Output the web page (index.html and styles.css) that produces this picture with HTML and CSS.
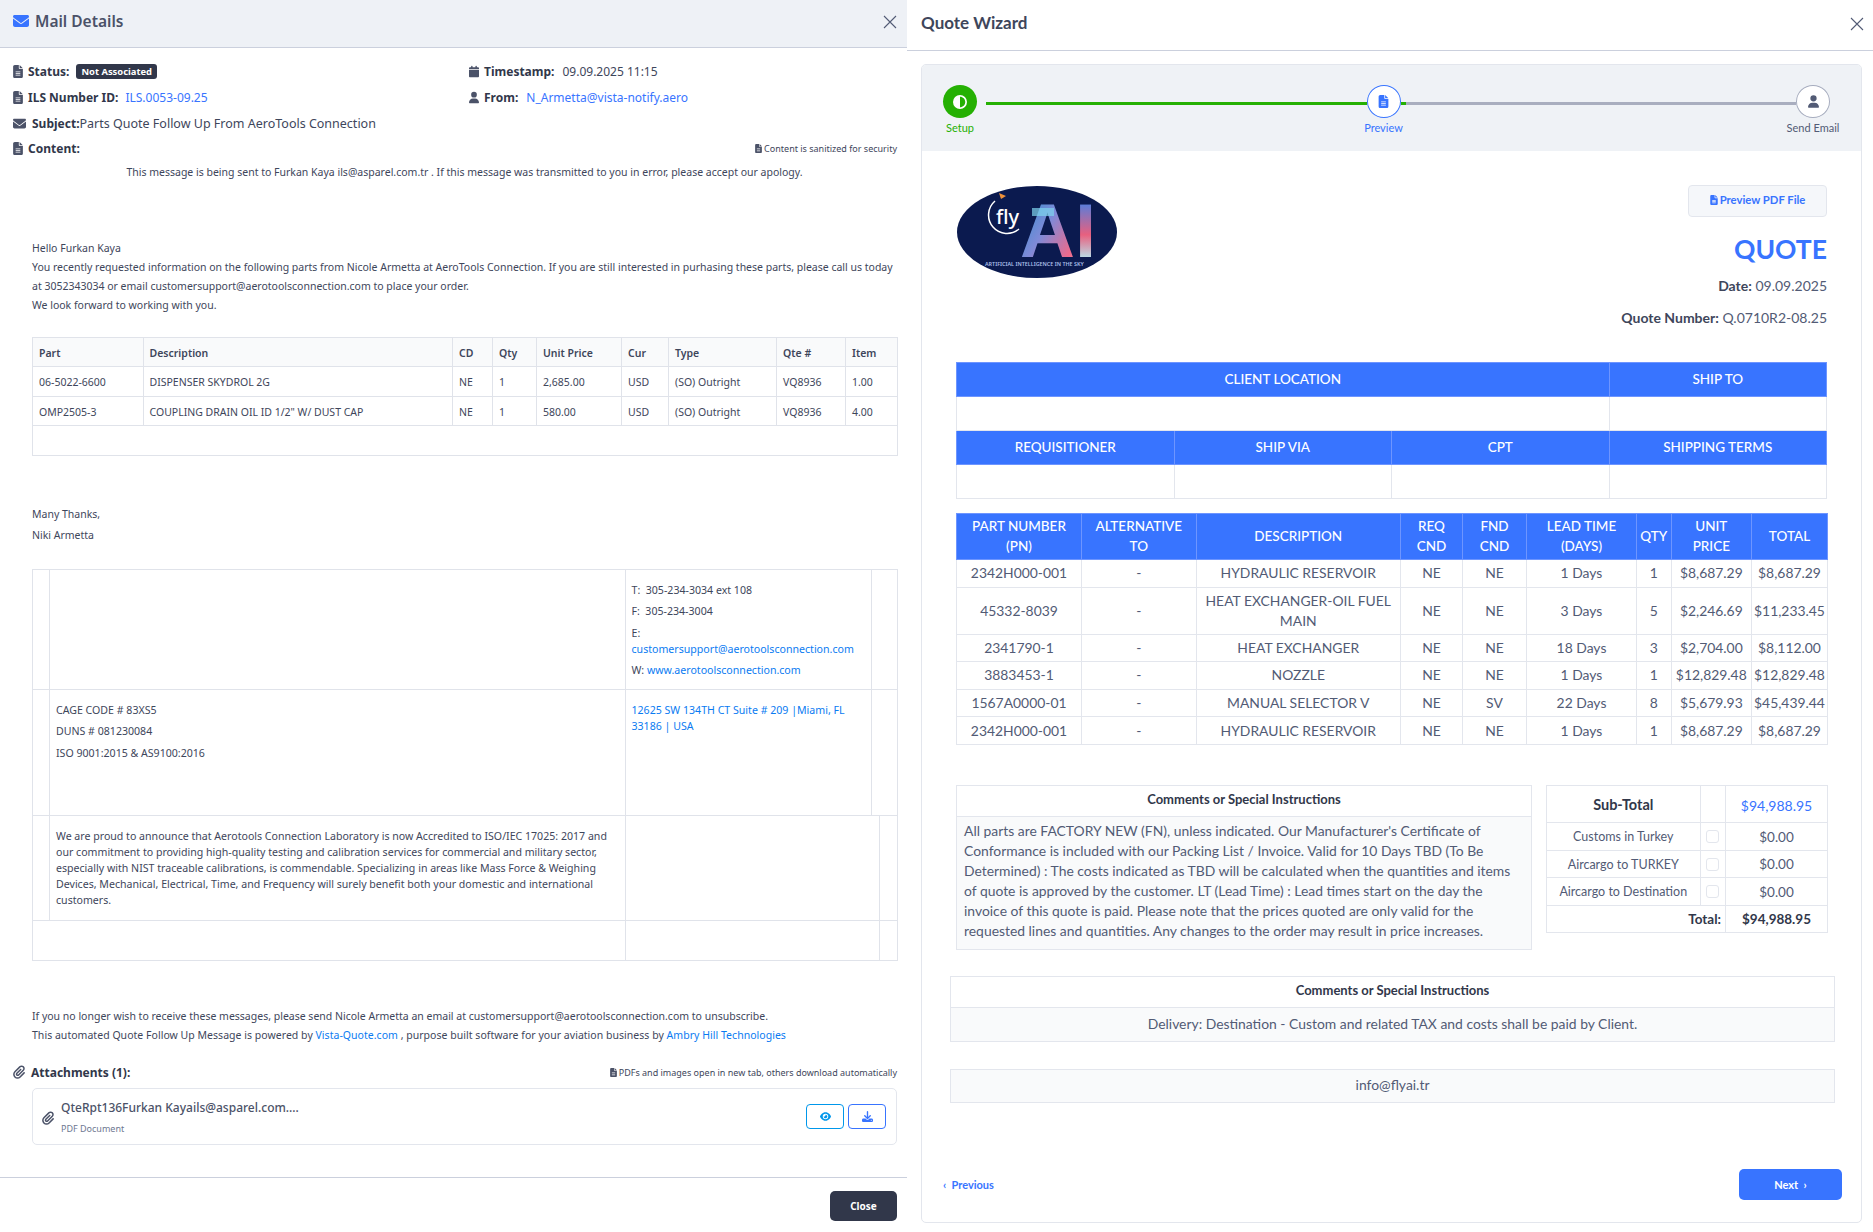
FILE: index.html
```html
<!DOCTYPE html>
<html lang="en">
<head>
  <meta charset="UTF-8" />
  <meta name="viewport" content="width=device-width, initial-scale=1.0" />
  <title>Mail Details / Quote Wizard</title>
  <link rel="stylesheet" href="styles.css">
</head>
<body>
  <svg class="icon-defs" width="0" height="0">
    <symbol id="i-file" viewBox="0 0 384 512"><path d="M64 0C28.7 0 0 28.7 0 64V448c0 35.3 28.7 64 64 64H320c35.3 0 64-28.7 64-64V160H256c-17.7 0-32-14.3-32-32V0H64zM256 0V128H384L256 0zM112 256H272c8.8 0 16 7.2 16 16s-7.2 16-16 16H112c-8.8 0-16-7.2-16-16s7.2-16 16-16zm0 64H272c8.8 0 16 7.2 16 16s-7.2 16-16 16H112c-8.8 0-16-7.2-16-16s7.2-16 16-16zm0 64H272c8.8 0 16 7.2 16 16s-7.2 16-16 16H112c-8.8 0-16-7.2-16-16s7.2-16 16-16z"/></symbol>
    <symbol id="i-mail" viewBox="0 0 512 512"><path d="M48 64C21.5 64 0 85.5 0 112c0 15.1 7.1 29.3 19.2 38.4L236.8 313.6c11.4 8.5 27 8.5 38.4 0L492.8 150.4c12.1-9.1 19.2-23.3 19.2-38.4c0-26.5-21.5-48-48-48H48zM0 176V384c0 35.3 28.7 64 64 64H448c35.3 0 64-28.7 64-64V176L294.4 339.2c-22.8 17.1-54 17.1-76.8 0L0 176z"/></symbol>
    <symbol id="i-cal" viewBox="0 0 448 512"><path d="M96 32V64H48C21.5 64 0 85.5 0 112v48H448V112c0-26.5-21.5-48-48-48H352V32c0-17.7-14.3-32-32-32s-32 14.3-32 32V64H160V32c0-17.7-14.3-32-32-32S96 14.3 96 32zM448 192H0V464c0 26.5 21.5 48 48 48H400c26.5 0 48-21.5 48-48V192z"/></symbol>
    <symbol id="i-user" viewBox="0 0 448 512"><path d="M224 256A128 128 0 1 0 224 0a128 128 0 1 0 0 256zm-45.7 48C79.8 304 0 383.8 0 482.3C0 498.7 13.3 512 29.7 512H418.3c16.4 0 29.7-13.3 29.7-29.7C448 383.8 368.2 304 269.7 304H178.3z"/></symbol>
    <symbol id="i-clip" viewBox="0 0 448 512"><path d="M364.2 83.8c-24.4-24.4-64-24.4-88.4 0l-184 184c-42.1 42.1-42.1 110.3 0 152.4s110.3 42.1 152.4 0l152-152c10.9-10.9 28.7-10.9 39.6 0s10.9 28.7 0 39.6l-152 152c-64 64-167.6 64-231.6 0s-64-167.6 0-231.6l184-184c46.3-46.3 121.3-46.3 167.6 0s46.3 121.3 0 167.6l-176 176c-28.6 28.6-75 28.6-103.6 0s-28.6-75 0-103.6l144-144c10.9-10.9 28.7-10.9 39.6 0s10.9 28.7 0 39.6l-144 144c-6.7 6.7-6.7 17.7 0 24.4s17.7 6.7 24.4 0l176-176c24.4-24.4 24.4-64 0-88.4z"/></symbol>
    <symbol id="i-eye" viewBox="0 0 576 512"><path d="M288 32c-80.8 0-145.5 36.8-192.6 80.6C48.6 156 17.3 208 2.5 243.7c-3.3 7.9-3.3 16.7 0 24.6C17.3 304 48.6 356 95.4 399.4C142.5 443.2 207.2 480 288 480s145.5-36.8 192.6-80.6c46.8-43.5 78.1-95.4 93-131.1c3.3-7.9 3.3-16.7 0-24.6c-14.9-35.7-46.2-87.7-93-131.1C433.5 68.8 368.8 32 288 32zM144 256a144 144 0 1 1 288 0 144 144 0 1 1 -288 0zm144-64c0 35.3-28.7 64-64 64c-7.1 0-13.9-1.2-20.3-3.3c-5.5-1.8-11.9 1.6-11.7 7.4c.3 6.9 1.3 13.8 3.2 20.7c13.7 51.2 66.4 81.6 117.6 67.9s81.6-66.4 67.9-117.6c-11.1-41.5-47.8-69.4-88.6-71.1c-5.8-.2-9.2 6.1-7.4 11.7c2.1 6.4 3.3 13.2 3.3 20.3z"/></symbol>
    <symbol id="i-down" viewBox="0 0 512 512"><path d="M288 32c0-17.7-14.3-32-32-32s-32 14.3-32 32V274.7l-73.4-73.4c-12.5-12.5-32.8-12.5-45.3 0s-12.5 32.8 0 45.3l128 128c12.5 12.5 32.8 12.5 45.3 0l128-128c12.5-12.5 12.5-32.8 0-45.3s-32.8-12.5-45.3 0L288 274.7V32zM64 352c-35.3 0-64 28.7-64 64v32c0 35.3 28.7 64 64 64H448c35.3 0 64-28.7 64-64V416c0-35.3-28.7-64-64-64H346.5l-45.3 45.3c-25 25-65.5 25-90.5 0L165.5 352H64zm368 56a24 24 0 1 1 0 48 24 24 0 1 1 0-48z"/></symbol>
    <symbol id="i-half" viewBox="0 0 512 512"><path d="M448 256c0-106-86-192-192-192V448c106 0 192-86 192-192zM0 256a256 256 0 1 1 512 0A256 256 0 1 1 0 256z"/></symbol>
    <symbol id="i-x" viewBox="0 0 14 14"><path d="M1 1L13 13M13 1L1 13" fill="none" stroke="currentColor" stroke-width="1.1"/></symbol>
  </svg>

  <div class="page">
    <!-- Mail details -->
    <section class="mail">
      <header class="mail-head">
        <svg class="head-icon"><use href="#i-mail"/></svg>
        <h2>Mail Details</h2>
        <svg class="close-x"><use href="#i-x"/></svg>
      </header>

      <div class="info">
        <div class="info-row"><svg class="ic"><use href="#i-file"/></svg><b>Status:</b><span class="badge">Not Associated</span></div>
        <div class="info-row info-right"><svg class="ic"><use href="#i-cal"/></svg><b>Timestamp:</b><span>09.09.2025 11:15</span></div>
        <div class="info-row"><svg class="ic"><use href="#i-file"/></svg><b>ILS Number ID:</b><a>ILS.0053-09.25</a></div>
        <div class="info-row info-right"><svg class="ic"><use href="#i-user"/></svg><b>From:</b><a>N_Armetta@vista-notify.aero</a></div>
        <div class="info-row info-wide"><svg class="ic ic-mail"><use href="#i-mail"/></svg><b>Subject:</b><span class="subject">Parts Quote Follow Up From AeroTools Connection</span></div>
        <div class="info-row info-wide info-split">
          <span class="info-row"><svg class="ic"><use href="#i-file"/></svg><b>Content:</b></span>
          <small class="note"><svg class="ic-small"><use href="#i-file"/></svg>Content is sanitized for security</small>
        </div>
      </div>

      <p class="notice">This message is being sent to Furkan Kaya ils@asparel.com.tr . If this message was transmitted to you in error, please accept our apology.</p>

      <div class="mail-body">
        <p>Hello Furkan Kaya</p>
        <p>You recently requested information on the following parts from Nicole Armetta at AeroTools Connection. If you are still interested in purhasing these parts, please call us today at 3052343034 or email customersupport@aerotoolsconnection.com to place your order.</p>
        <p>We look forward to working with you.</p>

        <table class="parts">
          <colgroup>
            <col class="c1"><col class="c2"><col class="c3"><col class="c4"><col class="c5"><col class="c6"><col class="c7"><col class="c8"><col class="c9">
          </colgroup>
          <thead>
            <tr><th>Part</th><th>Description</th><th>CD</th><th>Qty</th><th>Unit Price</th><th>Cur</th><th>Type</th><th>Qte #</th><th>Item</th></tr>
          </thead>
          <tbody>
            <tr><td>06-5022-6600</td><td>DISPENSER SKYDROL 2G</td><td>NE</td><td>1</td><td>2,685.00</td><td>USD</td><td>(SO) Outright</td><td>VQ8936</td><td>1.00</td></tr>
            <tr><td>OMP2505-3</td><td>COUPLING DRAIN OIL ID 1/2" W/ DUST CAP</td><td>NE</td><td>1</td><td>580.00</td><td>USD</td><td>(SO) Outright</td><td>VQ8936</td><td>4.00</td></tr>
            <tr><td colspan="9"></td></tr>
          </tbody>
        </table>

        <div class="thanks">
          <p>Many Thanks,</p>
          <p>Niki Armetta</p>
        </div>

        <table class="sig sig-a">
          <colgroup><col class="s1"><col class="s2"><col class="s3"><col class="s4"></colgroup>
          <tr class="sig-contact">
            <td></td>
            <td></td>
            <td>
              <p>T:&nbsp; 305-234-3034 ext 108</p>
              <p>F:&nbsp; 305-234-3004</p>
              <p class="tight">E:</p>
              <p><a>customersupport@aerotoolsconnection.com</a></p>
              <p>W: <a>www.aerotoolsconnection.com</a></p>
            </td>
            <td></td>
          </tr>
          <tr class="sig-address">
            <td></td>
            <td>
              <p>CAGE CODE # 83XS5</p>
              <p>DUNS # 081230084</p>
              <p>ISO 9001:2015 &amp; AS9100:2016</p>
            </td>
            <td><a>12625 SW 134TH CT Suite # 209 |Miami, FL 33186 | USA</a></td>
            <td></td>
          </tr>
        </table>
        <table class="sig sig-b">
          <colgroup><col class="s1"><col class="s2"><col class="s3b"><col class="s4b"></colgroup>
          <tr class="sig-text">
            <td></td>
            <td>We are proud to announce that Aerotools Connection Laboratory is now Accredited to ISO/IEC 17025: 2017 and our commitment to providing high-quality testing and calibration services for commercial and military sector, especially with NIST traceable calibrations, is commendable. Specializing in areas like Mass Force &amp; Weighing Devices, Mechanical, Electrical, Time, and Frequency will surely benefit both your domestic and international customers.</td>
            <td></td>
            <td></td>
          </tr>
          <tr class="sig-empty">
            <td colspan="2"></td>
            <td></td>
            <td></td>
          </tr>
        </table>

        <div class="unsub">
          <p>If you no longer wish to receive these messages, please send Nicole Armetta an email at customersupport@aerotoolsconnection.com to unsubscribe.</p>
          <p>This automated Quote Follow Up Message is powered by <a>Vista-Quote.com</a> , purpose built software for your aviation business by <a>Ambry Hill Technologies</a></p>
        </div>
      </div>

      <div class="attach-head">
        <div class="attach-title"><svg class="ic-clip"><use href="#i-clip"/></svg>Attachments (1):</div>
        <small class="note"><svg class="ic-small"><use href="#i-file"/></svg>PDFs and images open in new tab, others download automatically</small>
      </div>
      <div class="attach-card">
        <svg class="ic-clip card-clip"><use href="#i-clip"/></svg>
        <div class="attach-info">
          <div class="attach-name">QteRpt136Furkan Kayails@asparel.com....</div>
          <div class="attach-type">PDF Document</div>
        </div>
        <button class="icon-btn btn-eye"><svg><use href="#i-eye"/></svg></button>
        <button class="icon-btn btn-down"><svg><use href="#i-down"/></svg></button>
      </div>

      <footer class="mail-foot"><button class="btn-close">Close</button></footer>
    </section>

    <!-- Quote wizard -->
    <section class="wizard">
      <header class="wiz-head">
        <h2>Quote Wizard</h2>
        <svg class="close-x"><use href="#i-x"/></svg>
      </header>

      <div class="wiz-card">
        <div class="stepper">
          <div class="step step-done">
            <div class="dot"><svg><use href="#i-half"/></svg></div>
            <span>Setup</span>
          </div>
          <div class="step-line line-done"></div>
          <div class="step step-now">
            <div class="dot"><svg class="dot-file"><use href="#i-file"/></svg></div>
            <span>Preview</span>
          </div>
          <div class="step-line line-todo"></div>
          <div class="step step-next">
            <div class="dot"><svg class="dot-file"><use href="#i-user"/></svg></div>
            <span>Send Email</span>
          </div>
        </div>

        <div class="quote">
          <div class="quote-top">
            <svg class="logo" viewBox="0 0 160 92">
              <defs>
                <linearGradient id="aFill" x1="0" y1="0" x2="1" y2="0.7">
                  <stop offset="0" stop-color="#1f8fc9"/>
                  <stop offset="0.45" stop-color="#7f8ad8"/>
                  <stop offset="0.8" stop-color="#ee6a8c"/>
                  <stop offset="1" stop-color="#f2a3a8"/>
                </linearGradient>
                <linearGradient id="iFill" x1="0" y1="0" x2="0" y2="1">
                  <stop offset="0.2" stop-color="#5e7cd6"/>
                  <stop offset="0.55" stop-color="#e8607f"/>
                  <stop offset="0.85" stop-color="#b5eaf2"/>
                </linearGradient>
              </defs>
              <ellipse cx="80" cy="46" rx="80" ry="46" fill="#0b1a4f"/>
              <path d="M38 15A17 17 0 1 0 62 43" fill="none" stroke="#fff" stroke-width="1.5"/>
              <path d="M42 7L49 10L44 13Z" fill="#f0913a"/>
              <text class="logo-fly" x="39" y="38">fly</text>
              <text class="logo-ai" x="63" y="71"><tspan fill="url(#aFill)">A</tspan><tspan fill="url(#iFill)">I</tspan></text>
              <rect x="75" y="22" width="22" height="8" fill="#7fd4ee" opacity="0.7"/>
              <text class="logo-tag" x="28" y="80">ARTIFICIAL INTELLIGENCE IN THE SKY</text>
            </svg>
            <div class="quote-meta">
              <button class="btn-pdf"><svg><use href="#i-file"/></svg>Preview PDF File</button>
              <h1>QUOTE</h1>
              <p class="meta-date"><b>Date:</b> 09.09.2025</p>
              <p class="meta-num"><b>Quote Number:</b> Q.0710R2-08.25</p>
            </div>
          </div>

          <table class="ship">
            <tr class="ship-h"><th colspan="3">CLIENT LOCATION</th><th>SHIP TO</th></tr>
            <tr class="ship-b"><td colspan="3"></td><td></td></tr>
            <tr class="ship-h"><th>REQUISITIONER</th><th>SHIP VIA</th><th>CPT</th><th>SHIPPING TERMS</th></tr>
            <tr class="ship-b"><td></td><td></td><td></td><td></td></tr>
          </table>

          <table class="items">
            <colgroup>
              <col class="i1"><col class="i2"><col class="i3"><col class="i4"><col class="i5"><col class="i6"><col class="i7"><col class="i8"><col class="i9">
            </colgroup>
            <thead>
              <tr><th>PART NUMBER (PN)</th><th>ALTERNATIVE TO</th><th>DESCRIPTION</th><th>REQ CND</th><th>FND CND</th><th>LEAD TIME (DAYS)</th><th>QTY</th><th>UNIT<br>PRICE</th><th>TOTAL</th></tr>
            </thead>
            <tbody>
              <tr><td>2342H000-001</td><td>-</td><td>HYDRAULIC RESERVOIR</td><td>NE</td><td>NE</td><td>1 Days</td><td>1</td><td>$8,687.29</td><td>$8,687.29</td></tr>
              <tr><td>45332-8039</td><td>-</td><td>HEAT EXCHANGER-OIL FUEL MAIN</td><td>NE</td><td>NE</td><td>3 Days</td><td>5</td><td>$2,246.69</td><td>$11,233.45</td></tr>
              <tr><td>2341790-1</td><td>-</td><td>HEAT EXCHANGER</td><td>NE</td><td>NE</td><td>18 Days</td><td>3</td><td>$2,704.00</td><td>$8,112.00</td></tr>
              <tr><td>3883453-1</td><td>-</td><td>NOZZLE</td><td>NE</td><td>NE</td><td>1 Days</td><td>1</td><td>$12,829.48</td><td>$12,829.48</td></tr>
              <tr><td>1567A0000-01</td><td>-</td><td>MANUAL SELECTOR V</td><td>NE</td><td>SV</td><td>22 Days</td><td>8</td><td>$5,679.93</td><td>$45,439.44</td></tr>
              <tr><td>2342H000-001</td><td>-</td><td>HYDRAULIC RESERVOIR</td><td>NE</td><td>NE</td><td>1 Days</td><td>1</td><td>$8,687.29</td><td>$8,687.29</td></tr>
            </tbody>
          </table>

          <div class="summary">
            <div class="comments">
              <div class="comments-h">Comments or Special Instructions</div>
              <div class="comments-b">All parts are FACTORY NEW (FN), unless indicated. Our Manufacturer's Certificate of Conformance is included with our Packing List / Invoice. Valid for 10 Days TBD (To Be Determined) : The costs indicated as TBD will be calculated when the quantities and items of quote is approved by the customer. LT (Lead Time) : Lead times start on the day the invoice of this quote is paid. Please note that the prices quoted are only valid for the requested lines and quantities. Any changes to the order may result in price increases.</div>
            </div>
            <table class="totals">
              <colgroup><col class="t1"><col class="t2"><col class="t3"></colgroup>
              <tr class="row-sub"><th>Sub-Total</th><td></td><td class="sub-val">$94,988.95</td></tr>
              <tr><td>Customs in Turkey</td><td><span class="check"></span></td><td>$0.00</td></tr>
              <tr><td>Aircargo to TURKEY</td><td><span class="check"></span></td><td>$0.00</td></tr>
              <tr><td>Aircargo to Destination</td><td><span class="check"></span></td><td>$0.00</td></tr>
              <tr class="row-total"><th colspan="2">Total:</th><th>$94,988.95</th></tr>
            </table>
          </div>

          <div class="wide-box">
            <div class="wide-h">Comments or Special Instructions</div>
            <div class="wide-b">Delivery: Destination - Custom and related TAX and costs shall be paid by Client.</div>
          </div>
          <div class="wide-box mail-box">info@flyai.tr</div>

          <div class="wiz-nav">
            <a class="prev">&#8249;&nbsp; Previous</a>
            <button class="btn-next">Next &nbsp;&#8250;</button>
          </div>
        </div>
      </div>
    </section>
  </div>
</body>
</html>
```

FILE: styles.css
```css
* { box-sizing: border-box; }

body {
  margin: 0;
  font-family: "Noto Sans", Arial, sans-serif;
  color: #3e465b;
  background: #fff;
}

.icon-defs { position: absolute; }

.page {
  display: flex;
  width: 1873px;
  height: 1232px;
  overflow: hidden;
}

a { color: #0a7bf2; text-decoration: none; }

/* left panel */
.mail {
  width: 907px;
  flex: none;
  display: flex;
  flex-direction: column;
}

.mail-head {
  height: 48px;
  background: #eef1f6;
  border-bottom: 1px solid #cbd0dd;
  display: flex;
  align-items: center;
  padding: 0 10px 5px 13px;
}

.mail-head h2 {
  margin: 0 0 0 6px;
  font-size: 15.5px;
  font-weight: 600;
  color: #4b5268;
  flex: 1;
}

.head-icon { width: 16px; height: 16px; fill: #3874ff; }

.close-x { width: 14px; height: 14px; color: #525b75; margin-top: 2px; }

.info {
  display: grid;
  grid-template-columns: 456px 1fr;
  grid-auto-rows: 25.7px;
  margin-top: 11px;
  padding: 0 10px 0 13px;
  font-size: 12px;
}

.info-row {
  display: flex;
  align-items: center;
  gap: 5px;
}

.info-row b { font-weight: 700; color: #31374a; }
.info-row a { color: #3874ff; margin-left: 2px; }
.info-right span, .info-right a { margin-left: 3px; }

.info-wide { grid-column: 1 / 3; }
.info-split { justify-content: space-between; }

.ic { width: 10px; height: 13px; fill: #4b5268; flex: none; }
.ic-mail { width: 13px; margin-right: 1px; }

.subject { margin-left: -5px; font-size: 12.5px; }

.badge {
  background: #31374a;
  color: #fff;
  font-size: 9.4px;
  font-weight: 700;
  padding: 1px 5px;
  border-radius: 3px;
  margin-left: 2px;
}

.note { font-size: 9px; display: flex; align-items: center; gap: 2px; color: #3e465b; }
.ic-small { width: 7px; height: 9px; fill: #4b5268; }

.notice {
  margin: 2px 0 0;
  text-align: center;
  padding: 0 10px 0 32px;
  font-size: 10.5px;
  line-height: 17px;
}

.mail-body {
  padding: 0 10px 0 32px;
  margin-top: 58px;
  font-size: 10.5px;
}

.mail-body p { margin: 0; line-height: 19px; }

table { border-collapse: collapse; table-layout: fixed; }

.parts {
  width: 864.5px;
  margin-top: 22px;
}

.parts th, .parts td {
  border: 1px solid #e0e3ea;
  padding: 0 6px;
  height: 29.5px;
  text-align: left;
  font-weight: 400;
}

.parts th { background: #f9fafb; font-weight: 600; padding-top: 1px; }
.parts tr:nth-child(2) td { padding-top: 2px; }

.parts .c1 { width: 110.5px; }
.parts .c2 { width: 309.5px; }
.parts .c3 { width: 40px; }
.parts .c4 { width: 44px; }
.parts .c5 { width: 85px; }
.parts .c6 { width: 47px; }
.parts .c7 { width: 108px; }
.parts .c8 { width: 69px; }
.parts .c9 { width: 51.5px; }

.thanks { margin-top: 48px; }
.mail-body .thanks p { line-height: 21px; }

.sig { width: 864.5px; font-size: 10.6px; }
.sig-a { margin-top: 23px; }

.sig td {
  border: 1px solid #e0e3ea;
  vertical-align: top;
  padding: 12px 6px 0;
  line-height: 16px;
}

.sig p, .mail-body .sig p { line-height: 16px; margin-bottom: 5.5px; }
.mail-body .sig p.tight { margin-bottom: 0; }

.sig .s1 { width: 17px; }
.sig .s2 { width: 575.5px; }
.sig .s3 { width: 246px; }
.sig .s4 { width: 26px; }
.sig .s3b { width: 254px; }
.sig .s4b { width: 18px; }

.sig-contact { height: 120px; }
.sig-address { height: 126px; }
.sig-text { height: 105px; }
.sig-empty { height: 40px; }

.sig-b tr td { border-top: none; }

.unsub { margin-top: 46px; }
.unsub p:last-child { letter-spacing: 0.03px; }

.attach-head {
  display: flex;
  justify-content: space-between;
  align-items: center;
  padding: 0 10px 0 13px;
  margin-top: 17px;
  height: 20px;
}

.attach-title {
  display: flex;
  align-items: center;
  gap: 6px;
  font-size: 12px;
  font-weight: 700;
  color: #31374a;
}

.ic-clip { width: 12px; height: 14px; fill: #4b5268; }

.attach-card {
  height: 57px;
  margin: 6px 10px 0 32px;
  border: 1px solid #e3e6ed;
  border-radius: 5px;
  display: flex;
  align-items: center;
  padding: 0 10px 0 9px;
}

.card-clip { margin-top: 2px; }

.attach-info { flex: 1; margin-left: 7px; padding-top: 1px; }

.attach-name { font-size: 12px; font-weight: 500; color: #4b5268; line-height: 18px; }
.attach-type { font-size: 9px; color: #6e7891; margin-top: 5px; }

.icon-btn {
  width: 38px;
  height: 25px;
  background: #fff;
  border-radius: 4px;
  padding: 0;
  margin-left: 4px;
  display: flex;
  align-items: center;
  justify-content: center;
}

.icon-btn svg { width: 11px; height: 11px; }

.btn-eye { border: 1px solid #0097eb; fill: #0097eb; }
.btn-down { border: 1px solid #3874ff; fill: #3874ff; }

.mail-foot {
  margin-top: 32px;
  border-top: 1px solid #cbd0dd;
  padding: 13px 10px 0 0;
  display: flex;
  justify-content: flex-end;
}

.btn-close {
  width: 67px;
  height: 30px;
  background: #31374a;
  color: #fff;
  border: none;
  border-radius: 5px;
  font: 700 10px "Noto Sans", Arial, sans-serif;
}

/* right panel */
.wizard {
  flex: 1;
  font-family: Lato, "Noto Sans", Arial, sans-serif;
  color: #525b75;
}

.wiz-head {
  height: 51px;
  border-bottom: 1px solid #cbd0dd;
  display: flex;
  align-items: center;
  padding: 0 10px 5px 14px;
}

.wiz-head h2 {
  margin: 0;
  font-size: 17px;
  font-weight: 700;
  color: #3e465b;
  flex: 1;
}

.wiz-card {
  margin: 13px 12px 0 14px;
  height: 1159px;
  border: 1px solid #e3e6ed;
  border-radius: 5px;
  overflow: hidden;
}

.stepper {
  height: 86px;
  background: #eff2f6;
  display: flex;
  padding: 20px 31px 0 21px;
}

.step {
  width: 34px;
  flex: none;
  display: flex;
  flex-direction: column;
  align-items: center;
  position: relative;
  z-index: 1;
}

.step span { font-size: 11px; margin-top: 3px; white-space: nowrap; }

.dot {
  width: 34px;
  height: 33px;
  border-radius: 50%;
  display: flex;
  align-items: center;
  justify-content: center;
  flex: none;
}

.dot svg { width: 14px; height: 14px; fill: #fff; }
.dot .dot-file { width: 11px; height: 13px; }

.step-done .dot { background: #25b003; }
.step-done span { color: #25b003; }
.step-now .dot { background: #fff; border: 1px solid #3874ff; }
.step-now .dot svg { fill: #3874ff; }
.step-now span { color: #3874ff; }
.step-next .dot { background: #fff; border: 1px solid #a6acbe; }
.step-next .dot svg { fill: #525b75; }

.step-line { height: 3px; margin-top: 17px; }
.line-done { flex: none; width: 380.5px; background: #25b003; margin-left: 9px; }
.line-todo { flex: 1; background: linear-gradient(to right, #25b003 5px, #a9aebf 5px); }

.quote { padding: 34px 33px 0 34px; }

.quote-top {
  display: flex;
  justify-content: space-between;
  align-items: flex-start;
}

.logo { width: 160px; height: 92px; margin: 1px 0 0 1px; }
.logo-fly { font: 500 20px "Noto Sans", sans-serif; fill: #fff; }
.logo-ai { font: 700 76px "Liberation Sans", sans-serif; }
.logo-tag { font: 600 5.4px "Noto Sans", sans-serif; fill: #a9bfe8; }

.quote-meta {
  display: flex;
  flex-direction: column;
  align-items: flex-end;
  margin-right: 1px;
}

.btn-pdf {
  width: 139px;
  height: 32px;
  background: #f5f7fa;
  border: 1px solid #e3e6ed;
  border-radius: 4px;
  color: #3874ff;
  font: 700 11.3px Lato, "Noto Sans", sans-serif;
  display: flex;
  align-items: center;
  justify-content: center;
  gap: 2px;
  padding-bottom: 4px;
}

.btn-pdf svg { width: 8px; height: 10px; fill: #3874ff; }

.quote-meta h1 {
  margin: 17px 0 0;
  font-size: 26.5px;
  line-height: 30px;
  font-weight: 700;
  color: #3874ff;
}

.quote-meta p { margin: 0; font-size: 14px; line-height: 18px; }
.quote-meta b { color: #3e465b; }
.meta-date { padding-top: 13px; }
.meta-num { padding-top: 14px; }

.ship, .items { width: 871px; }

.ship { margin-top: 35px; }

.ship th, .ship td, .items th, .items td {
  border: 1px solid #e3e6ed;
  text-align: center;
  padding: 0;
}

.ship th, .items th {
  background: #3874ff;
  color: #fff;
  font-size: 13.5px;
  font-weight: 500;
  border-color: #6e95ff;
}

.ship th { padding-bottom: 2px; }

.ship-h { height: 34px; }
.ship-b { height: 34px; }

.items { margin-top: 14px; font-size: 13.9px; }

.items th { height: 46px; line-height: 20px; padding: 0 3px 2px; }
.items td { line-height: 20px; height: 27.6px; padding: 3px 0; }

.items .i1 { width: 125px; }
.items .i2 { width: 114.5px; }
.items .i3 { width: 204.5px; }
.items .i4 { width: 62px; }
.items .i5 { width: 64px; }
.items .i6 { width: 110px; }
.items .i7 { width: 34.6px; }
.items .i8 { width: 80.4px; }
.items .i9 { width: 76px; }

.summary {
  display: flex;
  align-items: flex-start;
  gap: 14px;
  margin-top: 40.5px;
}

.comments {
  width: 576px;
  height: 165px;
  border: 1px solid #e3e6ed;
}

.comments-h, .wide-h {
  text-align: center;
  font-size: 13px;
  font-weight: 700;
  color: #31374a;
  height: 31px;
  line-height: 27px;
  border-bottom: 1px solid #e3e6ed;
}

.comments-b {
  height: 132px;
  background: #f9fafb;
  padding: 4px 7px;
  font-size: 13.9px;
  line-height: 20px;
}

.totals {
  width: 281px;
  font-size: 13.5px;
}

.totals th, .totals td {
  border: 1px solid #e3e6ed;
  text-align: center;
  padding: 0;
  height: 27.5px;
}

.totals td:first-child { font-size: 12.5px; }

.totals .t1 { width: 153.5px; }
.totals .t2 { width: 25.5px; }
.totals .t3 { width: 102px; }

.row-sub th, .row-sub td { height: 37px; }
.row-sub th { font-size: 14.5px; color: #31374a; }
.sub-val { color: #3874ff; padding-top: 3px; font-size: 14px; }
.totals .sub-val { padding-top: 3px; }
.row-total th { color: #31374a; }
.row-total th:first-child { text-align: right; padding-right: 4px; }

.check {
  display: block;
  width: 13px;
  height: 13px;
  margin: 0 auto;
  border: 1px solid #e3e6ed;
  border-radius: 3px;
  background: #fff;
}

.wide-box {
  margin: 26px -7px 0 -6px;
  border: 1px solid #e3e6ed;
  font-size: 13.9px;
  text-align: center;
}

.wide-box + .wide-box { margin-top: 27px; }

.wide-b {
  height: 33px;
  line-height: 31px;
  background: #f9fafb;
}

.mail-box {
  height: 34px;
  line-height: 30px;
  background: #f9fafb;
}

.wiz-nav {
  margin: 66px -14px 0 -13px;
  display: flex;
  justify-content: space-between;
  align-items: center;
}

.prev { color: #3874ff; font-size: 11px; font-weight: 700; }

.btn-next {
  width: 103px;
  height: 31px;
  background: #3874ff;
  border: none;
  border-radius: 5px;
  color: #fff;
  font: 700 11px Lato, "Noto Sans", sans-serif;
}
```
